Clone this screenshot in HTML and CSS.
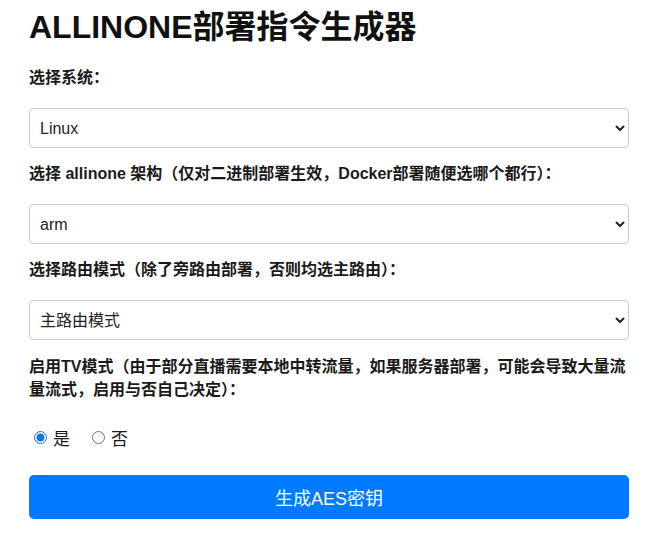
FILE: index.html
```html
<!DOCTYPE html>
<html lang="zh-CN">
<head>
<meta charset="utf-8">
<title>ALLINONE部署指令生成器</title>
<link rel="stylesheet" href="styles.css">
</head>
<body>
<div class="container">
  <h1 class="title">ALLINONE部署指令生成器</h1>
  <form class="form">
    <div class="field">
      <label class="label" for="os">选择系统：</label>
      <select class="select" id="os">
        <option>Linux</option>
        <option>Windows</option>
      </select>
    </div>
    <div class="field">
      <label class="label" for="arch">选择 allinone 架构（仅对二进制部署生效，Docker部署随便选哪个都行）：</label>
      <select class="select" id="arch">
        <option>arm</option>
        <option>amd64</option>
      </select>
    </div>
    <div class="field">
      <label class="label" for="mode">选择路由模式（除了旁路由部署，否则均选主路由）：</label>
      <select class="select" id="mode">
        <option>主路由模式</option>
        <option>旁路由模式</option>
      </select>
    </div>
    <div class="field">
      <div class="label label-wrap">启用TV模式（由于部分直播需要本地中转流量，如果服务器部署，可能会导致大量流量流式，启用与否自己决定）：</div>
      <div class="radios">
        <label class="radio"><input type="radio" name="tv" checked><span>是</span></label>
        <label class="radio"><input type="radio" name="tv"><span>否</span></label>
      </div>
    </div>
    <button type="button" class="btn">生成AES密钥</button>
  </form>
</div>
</body>
</html>
```
FILE: styles.css
```css
html, body {
  margin: 0;
  padding: 0;
  background: #fff;
}
body {
  font-family: "Liberation Sans", "Noto Sans CJK SC", sans-serif;
  color: #1a1a1a;
}
.container {
  width: 600px;
  padding: 7px 29px 0;
}
.title {
  margin: 0;
  font-size: 32px;
  line-height: 40px;
  font-weight: bold;
  color: #111;
}
.form {
  display: flex;
  flex-direction: column;
  margin-top: 20px;
}
.field {
  display: flex;
  flex-direction: column;
  margin-bottom: 15px;
}
.label {
  font-size: 16px;
  line-height: 22px;
  font-weight: bold;
  color: #1a1a1a;
  margin-bottom: 19px;
}
.label-wrap {
  line-height: 23px;
  margin-bottom: 25px;
}
.select {
  width: 100%;
  height: 40px;
  box-sizing: border-box;
  border: 1px solid #ccc;
  border-radius: 4px;
  padding: 0 6px;
  font-family: "Liberation Sans", "Noto Sans CJK SC", sans-serif;
  font-size: 16px;
  color: #222;
  background: #fff;
}
.radios {
  display: flex;
  gap: 17px;
  height: 22px;
  align-items: center;
  margin-bottom: 12px;
}
.radio {
  display: flex;
  align-items: center;
  font-size: 17px;
  color: #1a1a1a;
}
.radio input {
  margin: 0 6px 0 5px;
  width: 13px;
  height: 13px;
  accent-color: #1a73d9;
}
.btn {
  width: 100%;
  height: 44px;
  border: none;
  border-radius: 5px;
  background: #007bff;
  color: #fff;
  font-family: "Liberation Sans", "Noto Sans CJK SC", sans-serif;
  font-size: 18px;
  cursor: pointer;
}
```
